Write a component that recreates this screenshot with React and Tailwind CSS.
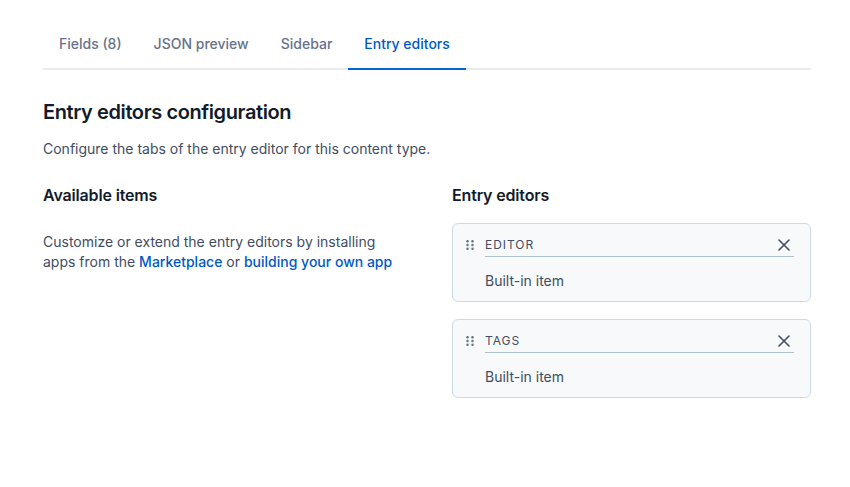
import React from "react";

function DragHandle() {
  return (
    <svg width="8" height="10" viewBox="0 0 8 10" className="shrink-0">
      {[1.2, 5, 8.8].map((y) =>
        [1.5, 6.5].map((x) => (
          <circle key={`${x}-${y}`} cx={x} cy={y} r="1.25" fill="#67728A" />
        ))
      )}
    </svg>
  );
}

function CloseIcon() {
  return (
    <svg width="14" height="14" viewBox="0 0 14 14">
      <path d="M2 2 L12 12 M12 2 L2 12" stroke="#414D63" strokeWidth="1.6" strokeLinecap="round" />
    </svg>
  );
}

function Card({ label }) {
  return (
    <div className="rounded-md border border-[#CFD9E0] bg-[#F7F9FA] pl-3 pr-4 pt-[11px] pb-[10px]">
      <div className="flex items-start gap-[11px]">
        <div className="flex h-[20px] items-center pl-px">
          <DragHandle />
        </div>
        <div className="flex-1">
          <div className="flex h-[22px] items-center justify-between border-b border-[#AEC1CC] pb-[2px]">
            <span className="text-[12px] font-normal uppercase tracking-[0.08em] text-[#414D63]">{label}</span>
            <span className="mr-[3px] flex items-center"><CloseIcon /></span>
          </div>
          <div className="mt-[14px] text-[14px] leading-5 text-[#414D63]">Built-in item</div>
        </div>
      </div>
    </div>
  );
}

export default function App() {
  const tabs = ["Fields (8)", "JSON preview", "Sidebar", "Entry editors"];
  return (
    <div className="min-h-[487px] w-[850px] bg-white font-['Inter',sans-serif] text-[#111B2B]">
      <div className="ml-[43px] w-[768px] pt-[20px]">
        <div className="flex border-b-2 border-[#E7EBEE]">
          {tabs.map((t, i) => {
            const active = i === 3;
            return (
              <div
                key={t}
                className={
                  active
                    ? "-mb-[2px] border-b-2 border-[#0466D6] px-4 pt-[14px] pb-[14px] text-[14px] font-medium leading-5 text-[#0059C8]"
                    : "px-4 pt-[14px] pb-[14px] text-[14px] font-medium leading-5 text-[#67728A]"
                }
              >
                {t}
              </div>
            );
          })}
        </div>

        <h1 className="mt-[28px] text-[20px] font-semibold leading-7 tracking-[-0.02em] text-[#111B2B]">Entry editors configuration</h1>
        <p className="mt-[13px] text-[14px] leading-5 text-[#414D63]">
          Configure the tabs of the entry editor for this content type.
        </p>

        <div className="mt-[24px] grid grid-cols-[359px_359px] gap-x-[50px]">
          <div>
            <h2 className="text-[16px] font-semibold leading-6 tracking-[-0.01em] text-[#111B2B]">Available items</h2>
            <p className="mt-[25px] max-w-[350px] text-[14px] leading-5 text-[#414D63]">
              Customize or extend the entry editors by installing apps from the{" "}
              <span className="font-medium text-[#0059C8]">Marketplace</span> or{" "}
              <span className="font-medium text-[#0059C8]">building your own app</span>
            </p>
          </div>
          <div>
            <h2 className="text-[16px] font-semibold leading-6 tracking-[-0.01em] text-[#111B2B]">Entry editors</h2>
            <div className="mt-[16px] flex flex-col gap-[17px]">
              <Card label="Editor" />
              <Card label="Tags" />
            </div>
          </div>
        </div>
      </div>
    </div>
  );
}
